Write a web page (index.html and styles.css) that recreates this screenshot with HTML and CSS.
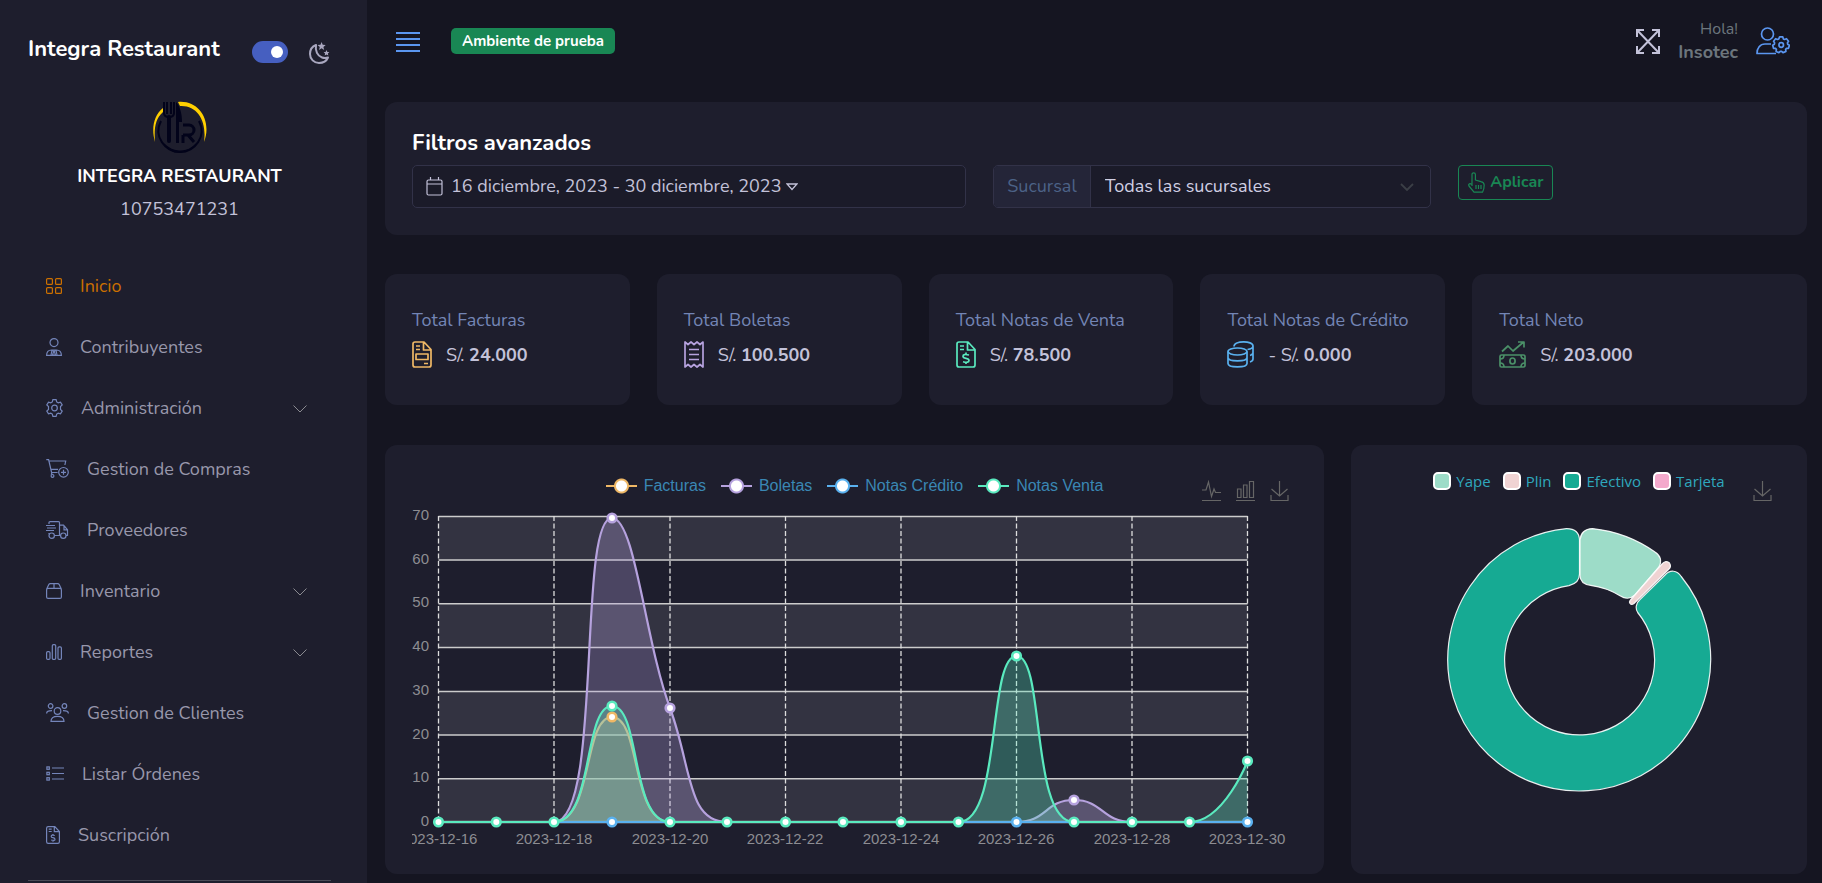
FILE: index.html
```html
<!DOCTYPE html>
<html lang="es">
<head>
<meta charset="utf-8">
<meta name="viewport" content="width=device-width, initial-scale=1">
<title>Integra Restaurant</title>
<link rel="stylesheet" href="styles.css">
</head>
<body>
<div class="layout">
  <aside class="sidebar">
    <div class="brand">
      <h1 class="brand-name">Integra Restaurant</h1>
      <input class="switch" type="checkbox" role="switch" checked aria-label="Modo oscuro">
      <svg class="moon" width="22" height="24" viewBox="0 0 22 24" fill="none" stroke="currentColor" stroke-width="2" stroke-linejoin="round"><path d="M8 4C4 5.500 2 9 2 13c0 5 4 9 9 9 4 0 7.500-2 9-5.500-2 .7-4 .7-6 0C9.500 15 7 10 8 4z"/><path d="M13 1l1.100 2.800 3 .2-2.300 1.900.8 3-2.600-1.600-2.600 1.600.8-3L8.900 4l3-.2z" fill="currentColor" stroke="none" transform="translate(.6 0)"/><path d="M18.500 9l.9 1.900 2 .2-1.500 1.400.4 2-1.800-1-1.800 1 .4-2-1.500-1.400 2-.2z" fill="currentColor" stroke="none"/></svg>
    </div>
    <div class="company">
      <svg class="logo" width="56" height="54" viewBox="0 0 56 54" fill="none">
        <path d="M11 7C2 14-1 27 3 41 2 28 3 18 11 11z" fill="#ffd000"/>
        <path d="M26 1c22-2 34 20 26 40C55 21 46 4 28 5z" fill="#ffd000"/>
        <path d="M9 20C1 35 13 51 28 51s27-16 19-31" stroke="#02031a" stroke-width="2"/>
        <path d="M12 42c9 10 24 10 32 0-6 12-26 14-32 0z" fill="#02031a"/>
        <path d="M12 1v11q0 4 5 4t5-4V1M15 1v12M19 1v12" stroke="#02031a" stroke-width="2"/>
        <path d="M17 16v24" stroke="#02031a" stroke-width="4" stroke-linecap="round"/>
        <path d="M24 1c4 4 6 12 6 20h-3v21h-3z" fill="#02031a"/>
        <path d="M31 24h6a5 5 0 010 10h-6M36 34l6 7M31 34v8" stroke="#02031a" stroke-width="3"/>
      </svg>
      <strong class="company-name">INTEGRA RESTAURANT</strong>
      <span class="company-id">10753471231</span>
    </div>
    <nav class="menu" aria-label="Principal">
      <a class="item active" href="#"><svg width="16" height="16" viewBox="0 0 16 16" class="ic"><rect x=".6" y=".6" width="5.800" height="5.800" rx="1"/><rect x="9.600" y=".6" width="5.800" height="5.800" rx="1"/><rect x=".6" y="9.600" width="5.800" height="5.800" rx="1"/><rect x="9.600" y="9.600" width="5.800" height="5.800" rx="1"/></svg>Inicio</a>
      <a class="item" href="#"><svg width="16" height="18" viewBox="0 0 16 18" class="ic"><circle cx="8" cy="4.600" r="4"/><path d="M.6 17.400c0-3.600 2-5.400 5-5.400h4.800c3 0 5 1.800 5 5.400zM6 12l-1 5M10 12l1 5M7 12h2l-.5 2 .8 2.400L8 17.400l-1.300-1L7.500 14z"/></svg>Contribuyentes</a>
      <a class="item" href="#"><svg width="17" height="18" viewBox="0 0 17 18" class="ic"><path d="M6.900.7h3.200l.6 2.200 1.500.9 2.300-.7 1.700 2.800-1.700 1.700v2.800l1.700 1.700-1.700 2.800-2.300-.7-1.500.9-.6 2.200H6.900l-.6-2.200-1.500-.9-2.300.7-1.700-2.800 1.700-1.700V7.600L.8 5.900l1.700-2.800 2.300.7 1.500-.9z"/><circle cx="8.500" cy="9" r="2.800"/></svg>Administración<svg class="chev" width="14" height="8" viewBox="0 0 14 8"><path d="M.5.500L7 7l6.500-6.500"/></svg></a>
      <a class="item" href="#"><svg width="23" height="19" viewBox="0 0 23 19" class="ic"><path d="M.3.700h2.300l3 12.800M3 2h16.700l-.8 4M5 10.300h7M5.600 13.500h6M6 13.500l-.8 2.300"/><circle cx="6.500" cy="16.900" r="1.400"/><circle cx="17.500" cy="13.300" r="4.800"/><path d="M17.500 10.800v5M15 13.300h5"/></svg>Gestion de Compras</a>
      <a class="item" href="#"><svg width="23" height="18" viewBox="0 0 23 18" class="ic"><path d="M3 3V1.600q0-1 1-1h8.500q1 0 1 1v12.900H9M3 13v-1M14 4.200h3.500l4 4.600v5.700H20M14.500 14.500h.5M18 4.500v4.300h3.500M0 4.500h9M1 7h9M0 9.500h8"/><circle cx="5.700" cy="14.700" r="2.700"/><circle cx="17.300" cy="14.700" r="2.700"/></svg>Proveedores</a>
      <a class="item" href="#"><svg width="16" height="16" viewBox="0 0 16 16" class="ic"><rect x=".6" y="5.300" width="14.800" height="10.100" rx="1.500"/><path d="M.8 5.800l2-4.200q.5-1 1.500-1h7.400q1 0 1.500 1l2 4.200M8 .6v4.700"/></svg>Inventario<svg class="chev" width="14" height="8" viewBox="0 0 14 8"><path d="M.5.500L7 7l6.500-6.500"/></svg></a>
      <a class="item" href="#"><svg width="16" height="16" viewBox="0 0 16 16" class="ic"><rect x=".6" y="7.600" width="3.400" height="7.800" rx="1.200"/><rect x="6.300" y=".6" width="3.400" height="14.800" rx="1.200"/><rect x="12" y="2.800" width="3.400" height="12.600" rx="1.200"/></svg>Reportes<svg class="chev" width="14" height="8" viewBox="0 0 14 8"><path d="M.5.500L7 7l6.500-6.500"/></svg></a>
      <a class="item" href="#"><svg width="23" height="19" viewBox="0 0 23 19" class="ic"><circle cx="4.600" cy="3" r="2.300"/><circle cx="18.400" cy="3" r="2.300"/><circle cx="11.500" cy="8" r="3.300"/><path d="M5 18.300c0-3.500 2.500-5 6.500-5s6.500 1.500 6.500 5zM.6 10.500C.6 8.300 2 7.700 6 7.700M22.400 10.500c0-2.200-1.400-2.800-5.400-2.800"/></svg>Gestion de Clientes</a>
      <a class="item" href="#"><svg width="18" height="15" viewBox="0 0 18 15" class="ic"><path d="M6 2h12M6 7.500h12M6 13h12"/><rect x=".9" y=".9" width="2.400" height="2.400"/><rect x=".9" y="6.300" width="2.400" height="2.400"/><rect x=".9" y="11.700" width="2.400" height="2.400"/></svg>Listar Órdenes</a>
      <a class="item" href="#"><svg width="14" height="18" viewBox="0 0 14 18" class="ic"><path d="M2.200.6h6.600l4.600 4.900v10.300q0 1.600-1.600 1.600H2.200q-1.600 0-1.600-1.600V2.200Q.6.600 2.200.6zM8.300.8v4.900h5M2.700 3.200h3M2.700 5.500h3M8.800 9.500q-3.600-1.200-3.600.9 0 1 1.800 1.300 2 .4 2 1.500 0 2-3.900.8M7 8v1M7 14.500v1.200"/></svg>Suscripción</a>
    </nav>
    <hr class="rule">
  </aside>

  <main class="main">
    <header class="topbar">
      <button class="plain burger" aria-label="Menú"><svg width="24" height="24" viewBox="0 0 24 24" stroke="currentColor" stroke-width="2"><path d="M0 4h24M0 10h24M0 16h24M0 22h24"/></svg></button>
      <span class="badge">Ambiente de prueba</span>
      <button class="plain expand" aria-label="Pantalla completa"><svg width="24" height="25" viewBox="0 0 24 25" fill="none" stroke="currentColor" stroke-width="2"><path d="M1 1l22 23M23 1L1 24M1 8V1h7M16 1h7v7M23 17v7h-7M8 24H1v-7"/></svg></button>
      <div class="user"><span class="hello">Hola!</span><strong class="user-name">Insotec</strong></div>
      <button class="plain account" aria-label="Cuenta"><svg width="34" height="28" viewBox="0 0 34 28" fill="none" stroke="currentColor" stroke-width="1.700" stroke-linejoin="round"><circle cx="11.500" cy="7" r="6"/><path d="M15 17H9c-5 0-8 4-8 9.500h19"/><path d="M23.600 9.900h3.200l.5 2 1.200.6 2-.8 2 2.500-1.100 1.700.3 1.300 1.700 1.100-.9 3-2 .1-.9 1 .3 2-2.900 1.300-1.400-1.400h-1.300l-1.400 1.400-2.800-1.300.3-2-.9-1-2-.1-.8-3 1.700-1.100.2-1.300-1-1.700 2-2.500 2 .8 1.200-.6z"/><circle cx="25.200" cy="18" r="2.300"/></svg></button>
    </header>

    <section class="card filters">
      <h2 class="filters-title">Filtros avanzados</h2>
      <form class="filter-grid">
        <button type="button" class="field date"><svg width="17" height="19" viewBox="0 0 17 19" fill="none" stroke="currentColor" stroke-width="1.200"><rect x="1" y="3" width="15" height="15" rx="1.500"/><path d="M1 7h15M4.500 0v3M12.500 0v3"/></svg><span>16 diciembre, 2023 - 30 diciembre, 2023</span><svg class="caret" width="12" height="9" viewBox="0 0 12 9" fill="none" stroke="currentColor" stroke-width="1.300"><path d="M1 2h10L6 7.500z"/></svg></button>
        <div class="field group">
          <label class="group-label" for="sucursal">Sucursal</label>
          <div class="select-wrap">
            <select id="sucursal" class="select"><option>Todas las sucursales</option></select>
            <svg class="select-arrow" width="14" height="9" viewBox="0 0 14 9" fill="none" stroke="#3b3f46" stroke-width="1.800"><path d="M1 1l6 6 6-6"/></svg>
          </div>
        </div>
        <button type="button" class="apply"><svg width="17" height="21" viewBox="0 0 17 21" fill="none" stroke="currentColor" stroke-width="1.200" stroke-linejoin="round"><path d="M4 14V2.500a1.700 1.700 0 013.400 0V8l5.500 1.600q3.300.8 3.300 3.500c0 2.500-.5 5-1.700 7.100H6L1 14q-1-2 1-2.400l2 .9M8 13v4M10.500 13v4M13 13v4"/></svg><span>Aplicar</span></button>
      </form>
    </section>

    <section class="totals">
      <article class="card total"><h3>Total Facturas</h3><p><svg width="20" height="27" viewBox="0 0 20 27" class="tic orange"><path d="M3 1h9l7 7.500V24q0 2-2 2H3q-2 0-2-2V3q0-2 2-2zM11.500 1v8H19M4 5h4M4 8.500h4M12 22.500h4"/><rect x="4" y="13" width="12" height="5.500"/></svg><span>S/. <b>24.000</b></span></p></article>
      <article class="card total"><h3>Total Boletas</h3><p><svg width="20" height="27" viewBox="0 0 20 27" class="tic purple"><path d="M1 1v25l3-2.500 3 2.500 3-2.500 3 2.500 3-2.500 3 2.500V1l-3 2.500L13 1l-3 2.500L7 1 4 3.500zM5 8.500h10M5 13.500h10M5 18.500h10"/></svg><span>S/. <b>100.500</b></span></p></article>
      <article class="card total"><h3>Total Notas de Venta</h3><p><svg width="20" height="27" viewBox="0 0 20 27" class="tic mint"><path d="M3 1h9l7 7.500V24q0 2-2 2H3q-2 0-2-2V3q0-2 2-2zM11.500 1v8H19M4 5h4M4 8.500h4M13 14q-6-1.500-6 1.300 0 1.600 3 2t3 2.200q0 2.700-6 1.200M10 11.500v2M10 21v2"/></svg><span>S/. <b>78.500</b></span></p></article>
      <article class="card total"><h3>Total Notas de Crédito</h3><p><svg width="27" height="27" viewBox="0 0 27 27" class="tic blue"><ellipse cx="10.500" cy="10.500" rx="9.500" ry="3.500"/><path d="M1 10.500v12C1 27 20 27 20 22.500v-12M1 16.500c0 4.500 19 4.500 19 0M7 5.500C7-.5 26-.5 26 5c0 2-2 3-5.500 3.500M26 5v13c0 1.500-1.500 2.500-3 3M26 11.500c0 1.500-1.500 2.500-3 3"/></svg><span>- S/. <b>0.000</b></span></p></article>
      <article class="card total"><h3>Total Neto</h3><p><svg width="27" height="27" viewBox="0 0 27 27" class="tic green"><path d="M3 10.500L9 5l5 5 10-8.500M19 1h6v5.500"/><rect x="1" y="14" width="25" height="12" rx="1.500"/><ellipse cx="13.500" cy="20" rx="2.600" ry="3"/><path d="M1 18q4 0 4-4M1 22q4 0 4 4M26 18q-4 0-4-4M26 22q-4 0-4 4"/></svg><span>S/. <b>203.000</b></span></p></article>
    </section>

    <section class="charts">
      <article class="card chart">
        <div class="chart-head">
          <ul class="legend series">
            <li class="k-orange">Facturas</li>
            <li class="k-purple">Boletas</li>
            <li class="k-blue">Notas Crédito</li>
            <li class="k-mint">Notas Venta</li>
          </ul>
          <div class="tools">
            <button class="plain" aria-label="Líneas"><svg width="19" height="22" viewBox="0 0 19 22"><path d="M0 10h4l2.500-8 3 14.500L12 9l1.500 3.500H19M0 20.500h19"/></svg></button>
            <button class="plain" aria-label="Barras"><svg width="19" height="22" viewBox="0 0 19 22"><path d="M1.500 9h3.500v8.500H1.500zM7.500 5h3.500v12.500H7.500zM13.500 1.500h4v16h-4zM0 20.500h19"/></svg></button>
            <button class="plain" aria-label="Descargar"><svg width="19" height="22" viewBox="0 0 19 22"><path d="M9.500 1v15M1.500 9l8 7 8-7M1 15v5.500h17V15"/></svg></button>
          </div>
        </div>
        <svg class="plot" viewBox="0 32 885 343" role="img" aria-label="Ventas por día">
          <g fill="#fafafa" fill-opacity=".1"><path d="M26.500 44.500h809v43.700h-809zM26.500 131.800h809v43.700h-809zM26.500 219.200h809v43.700h-809zM26.500 306.500h809v43.700h-809z"/></g>
          <path d="M26.500 44.500h809M26.500 88h809M26.500 131.800h809M26.500 175.500h809M26.500 219.500h809M26.500 263h809M26.500 306.800h809M26.500 350h809" stroke="#ccc" stroke-width="1.500"/>
          <path d="M26.500 44v306M142 44v306M258 44v306M373.500 44v306M489 44v306M604.500 44v306M720 44v306M835.500 44v306" stroke="#ddd" stroke-width="1.300" stroke-dasharray="5 2.500"/>
          <path d="M26.500 350h809" stroke="#6e7079" stroke-width="3"/>
          <g fill="none" stroke-width="2.200">
            <path fill="#efb866" fill-opacity=".3" stroke="none" d="M142 350C181 350 171 245 200 245S219 350 258 350z"/>
            <path stroke="#efb866" d="M26.500 350H142C181 350 171 245 200 245S219 350 258 350H835.500"/>
            <path fill="#b6a2de" fill-opacity=".3" stroke="none" d="M142 350C191 350 165 46 200 46 223 46 233 169 258 236 280 296 275 350 315 350zM604.500 350C635 350 633 328 662 328S690 350 720 350z"/>
            <path stroke="#b6a2de" d="M26.500 350H142C191 350 165 46 200 46 223 46 233 169 258 236 280 296 275 350 315 350H604.500C635 350 633 328 662 328S690 350 720 350H835.500"/>
            <path stroke="#5ab1ef" d="M26.500 350h809"/>
            <path fill="#5aeabf" fill-opacity=".3" stroke="none" d="M142 350C182 350 171 234 200 234S218 350 258 350zM546.500 350C590 350 575.500 184 604.500 184S618 350 662 350zM777.500 350C812 350 835.500 289 835.500 289V350z"/>
            <path stroke="#5aeabf" d="M26.500 350H142C182 350 171 234 200 234S218 350 258 350H546.500C590 350 575.500 184 604.500 184S618 350 662 350H777.500C812 350 835.500 289 835.500 289" />
            <path stroke="#5ab1ef" d="M152 350h96M556 350h97M787 350h48"/>
          </g>
          <g fill="#fff" stroke-width="2.600">
            <circle cx="200" cy="245" r="4.300" stroke="#efb866"/>
            <g stroke="#b6a2de"><circle cx="200" cy="46" r="4.300"/><circle cx="258" cy="236" r="4.300"/><circle cx="662" cy="328" r="4.300"/></g>
            <g stroke="#5ab1ef"><circle cx="200" cy="350" r="4.300"/><circle cx="604.500" cy="350" r="4.300"/><circle cx="835.500" cy="350" r="4.300"/></g>
            <g stroke="#5aeabf"><circle cx="26.500" cy="350" r="4.300"/><circle cx="84.300" cy="350" r="4.300"/><circle cx="142" cy="350" r="4.300"/><circle cx="200" cy="234" r="4.300"/><circle cx="258" cy="350" r="4.300"/><circle cx="315" cy="350" r="4.300"/><circle cx="373.500" cy="350" r="4.300"/><circle cx="431" cy="350" r="4.300"/><circle cx="489" cy="350" r="4.300"/><circle cx="546.500" cy="350" r="4.300"/><circle cx="604.500" cy="184" r="4.300"/><circle cx="662" cy="350" r="4.300"/><circle cx="720" cy="350" r="4.300"/><circle cx="777.500" cy="350" r="4.300"/><circle cx="835.500" cy="289" r="4.300"/></g>
          </g>
          <g class="axis" text-anchor="end"><text x="17" y="48">70</text><text x="17" y="92">60</text><text x="17" y="135">50</text><text x="17" y="179">40</text><text x="17" y="223">30</text><text x="17" y="267">20</text><text x="17" y="310">10</text><text x="17" y="354">0</text></g>
          <g class="axis" text-anchor="middle"><text x="27" y="372">2023-12-16</text><text x="142" y="372">2023-12-18</text><text x="258" y="372">2023-12-20</text><text x="373" y="372">2023-12-22</text><text x="489" y="372">2023-12-24</text><text x="604" y="372">2023-12-26</text><text x="720" y="372">2023-12-28</text><text x="835" y="372">2023-12-30</text></g>
        </svg>
      </article>

      <article class="card chart">
        <div class="chart-head">
          <ul class="legend methods">
            <li class="k-yape">Yape</li>
            <li class="k-plin">Plin</li>
            <li class="k-cash">Efectivo</li>
            <li class="k-card">Tarjeta</li>
          </ul>
          <div class="tools">
            <button class="plain" aria-label="Descargar"><svg width="19" height="22" viewBox="0 0 19 22"><path d="M9.500 1v15M1.500 9l8 7 8-7M1 15v5.500h17V15"/></svg></button>
          </div>
        </div>
        <svg class="plot" viewBox="0 0 402 343" role="img" aria-label="Métodos de pago" stroke="#fff" stroke-opacity=".9" stroke-width="1.200">
          <path fill="#16aa93" d="M201.500 36Q201 24.500 188.500 24.600A131.500 131.500 0 10303.200 72.500C299 66 292 65.500 287 71L262 95.500C258 99 257 104.500 259.700 108.500A75 75 0 11191 81.700Q201.500 79 201.500 70z"/>
          <path fill="#9ddcc8" d="M202 36Q203 25 214.500 24.600A132 132 0 01277 48C283 52 284 57 281 63L257 91C252 95.500 247 95 242 91.700A75 75 0 00212.700 81.400Q202 80 202 71z"/>
          <path fill="#f0d3d3" d="M283.500 60.500Q288 55.500 291.500 59 294 63 290 66L256 99.500Q253.500 101.500 252 99.500 250.800 98 252.500 96z"/>
        </svg>
      </article>
    </section>
  </main>
</div>
</body>
</html>
```
FILE: styles.css
```css
*, *::before { box-sizing: border-box; }

body {
  margin: 0;
  background: #151521;
  color: #c3c2d9;
  font-family: "Nunito", "Lato", sans-serif;
  font-size: 18px;
  line-height: 24px;
}

h1, h2, h3, p, ul { margin: 0; padding: 0; }
button, select { font: inherit; }
svg { display: block; flex: none; }

.plain { padding: 0; border: 0; background: none; color: inherit; }

.layout { display: flex; min-height: 100vh; }

/* Sidebar */
.sidebar {
  flex: none;
  width: 367px;
  padding: 36px 36px 0 28px;
  background: #1e1e2d;
}
.brand { display: flex; align-items: center; height: 32px; }
.brand-name {
  flex: 1;
  padding-bottom: 6px;
  color: #fff;
  font-size: 22px;
  line-height: 24px;
}
.switch {
  appearance: none;
  display: flex;
  justify-content: flex-end;
  align-items: center;
  width: 36px;
  height: 22px;
  margin: 0 20px 0 0;
  padding: 0 5px;
  border-radius: 11px;
  background: #465fc0;
}
.switch::before { content: ""; width: 12px; height: 12px; border-radius: 50%; background: #fff; }
.moon { margin: 2px 1px 0 0; color: #a9a7bf; }

.company { display: flex; flex-direction: column; align-items: center; padding-top: 33px; }
.company-name { margin-top: 9px; color: #fff; }
.company-id { margin-top: 9px; }

.menu { display: flex; flex-direction: column; margin-top: 34px; padding: 0 24px 0 18px; }
.item {
  display: flex;
  align-items: center;
  gap: 18px;
  height: 61px;
  color: #9897ab;
  text-decoration: none;
}
.item.active { color: #cc7000; }
.ic { fill: none; stroke: #7485ba; stroke-width: 1.200; }
.active .ic { stroke: #cc7000; }
.chev { margin: 3px 0 0 auto; fill: none; stroke: #8a8a90; }
.rule { height: 1px; margin: 15px 0 0; border: 0; background: #4b4b57; }

/* Top bar */
.main { flex: 1; min-width: 0; padding: 0 15px 9px 18px; }
.topbar { display: flex; align-items: center; height: 82px; padding: 0 17px 0 11px; }
.burger, .account { color: #5b96f0; }
.badge {
  margin: 0 auto 0 31px;
  padding: 0 11px;
  border-radius: 5px;
  background: #198754;
  color: #fff;
  font-size: 15px;
  font-weight: 700;
  line-height: 26px;
}
.expand { margin-right: 18px; color: #c3c2d9; }
.user { display: flex; flex-direction: column; align-items: flex-end; margin-right: 18px; color: #6c757d; line-height: 23px; }
.hello { font-size: 16px; }

/* Cards */
.card { border-radius: 12px; background: #1e1e2d; }

.filters { margin-top: 20px; padding: 29px 27px 27px; }
.filters-title { color: #fff; font-size: 22px; line-height: 24px; }
.filter-grid {
  display: grid;
  grid-template-columns: repeat(12, 1fr);
  align-items: start;
  column-gap: 27px;
  margin-top: 10px;
}
.field {
  height: 43px;
  overflow: hidden;
  border: 1px solid #323248;
  border-radius: 5px;
  background: #1b1b29;
  color: #c3c2d9;
}
.date { grid-column: span 5; display: flex; align-items: center; gap: 8px; padding: 0 13px; }
.date span { padding-bottom: 2px; }
.caret { margin-left: -3px; }
.group { grid-column: span 4; display: flex; }
.group-label {
  padding: 8px 13px;
  border-right: 1px solid #323248;
  background: #242538;
  color: #4c6287;
}
.select-wrap { position: relative; flex: 1; }
.select {
  appearance: none;
  width: 100%;
  height: 41px;
  padding: 0 14px 2px;
  border: 0;
  background: transparent;
  color: #d0cfe4;
}
.select-arrow { position: absolute; top: 17px; right: 16px; pointer-events: none; }
.apply {
  grid-column: span 3;
  justify-self: start;
  display: flex;
  align-items: center;
  gap: 5px;
  height: 35px;
  padding: 0 9px;
  border: 1px solid #198754;
  border-radius: 4px;
  background: none;
  color: #198754;
  font-size: 16px;
  font-weight: 700;
}
.apply span { padding-bottom: 2px; }

.totals {
  display: grid;
  grid-template-columns: repeat(4, 245fr) 335fr;
  gap: 27px;
  margin-top: 39px;
}
.total { padding: 34px 27px 37px; }
.total h3 { color: #7385b5; font-size: 18px; font-weight: 400; }
.total p { display: flex; align-items: center; gap: 14px; height: 27px; margin-top: 9px; }
.tic { fill: none; stroke: currentColor; stroke-width: 1.700; stroke-linejoin: round; }
.orange { color: #efb866; }
.purple { color: #b6a2de; }
.mint { color: #5aeabf; }
.blue { color: #5ab1ef; }
.green { color: #4b9068; }

/* Charts */
.charts {
  display: grid;
  grid-template-columns: 939fr 456fr;
  gap: 27px;
  margin-top: 40px;
}
.chart { padding: 27px; }
.chart-head { display: grid; grid-template-columns: 1fr auto 1fr; height: 32px; }
.legend { grid-column: 2; display: flex; list-style: none; white-space: nowrap; }
.legend li { display: flex; align-items: center; }
.series { gap: 15px; height: 28px; color: #3a87b4; font: 16px/24px "Liberation Sans", Arial, sans-serif; }
.series li::before {
  content: "";
  width: 31px;
  height: 16px;
  margin-right: 7px;
  background:
    radial-gradient(circle, #fff 5px, currentColor 6px, currentColor 7px, transparent 8px),
    linear-gradient(currentColor, currentColor) center / 100% 2px no-repeat;
  color: var(--key);
}
.k-orange { --key: #efb866; }
.k-purple { --key: #b6a2de; }
.k-blue { --key: #5ab1ef; }
.k-mint { --key: #5aeabf; }
.methods { gap: 12px; height: 18px; color: #2fa8bd; font: 15px/18px "Open Sans", "Noto Sans", sans-serif; }
.methods li::before {
  content: "";
  width: 18px;
  height: 18px;
  margin-right: 5px;
  border: 2px solid #fff;
  border-radius: 5px;
  background: var(--key);
}
.k-yape { --key: #9ddcc8; }
.k-plin { --key: #f0d3d3; }
.k-cash { --key: #16aa93; }
.k-card { --key: #f4a9cc; }
.tools { grid-column: 3; justify-self: end; display: flex; align-items: flex-start; gap: 15px; padding: 8px 8px 0 0; }
.tools svg { fill: none; stroke: #666; stroke-width: 1.200; }
.plot { width: 100%; height: auto; }
.axis { fill: #8d8d92; font: 15px "Liberation Sans", Arial, sans-serif; }
```
